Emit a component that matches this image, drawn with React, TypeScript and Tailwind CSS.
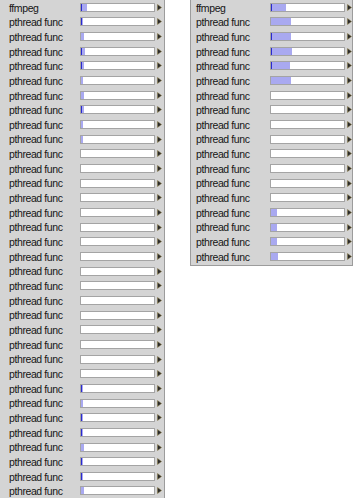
type Fill = [number, boolean]

const leftRows: Fill[] = [
  [6, true], [2, true], [3, false], [4, true], [3, true], [2, false], [3, false], [3, true], [2, false], [2, false],
  [0, false], [0, false], [0, false], [0, false], [0, false], [0, false], [0, false], [0, false],
  [0, false], [0, false], [0, false], [0, false], [0, false], [0, false], [0, false], [0, false],
  [2, true], [2, false], [2, true], [2, true], [3, false], [2, true], [2, true], [3, false],
]

const rightRows: Fill[] = [
  [15, true], [20, false], [20, true], [21, true], [19, true], [20, false],
  [0, false], [0, false], [0, false], [0, false], [0, false], [0, false], [0, false], [0, false],
  [6, false], [6, false], [6, false], [7, false],
]

function Row({ label, fill, pad }: { label: string; fill: Fill; pad: string }) {
  const [w, dark] = fill
  return (
    <div className="flex items-center h-[14.67px]">
      <div className={"w-[79px] text-[10.5px] leading-none tracking-[-0.4px] text-[#151515] pt-[1px] " + pad}>{label}</div>
      <div className="w-[75px] h-[9px] border border-[#a4a4a4] bg-white flex">
        {w > 0 && (
          <div
            className={dark ? "h-full bg-[#a9a9f0] border-l-[1.5px] border-[#2a2ad0]" : "h-full bg-[#a9a9f0]"}
            style={{ width: w }}
          />
        )}
      </div>
      <svg width="5" height="7" viewBox="0 0 5 7" className="ml-[2px]">
        <path d="M0.5 0.5 L4.5 3.5 L0.5 6.5 Z" fill="#2b2b2b" stroke="#8a7a40" strokeWidth="0.5" />
      </svg>
    </div>
  )
}

export default function App() {
  return (
    <div className="w-[363px] h-[500px] overflow-hidden bg-white flex items-start" style={{ fontFamily: '"Liberation Sans", Arial, sans-serif' }}>
      <div className="w-[165px] bg-[#d4d4d4] border-r border-[#9c9c9c] pl-[1px]">
        {leftRows.map((f, i) => (
          <Row key={i} label={i === 0 ? "ffmpeg" : "pthread func"} fill={f} pad="pl-[8px]" />
        ))}
      </div>
      <div className="ml-[25px] w-[163px] bg-[#d4d4d4] border-x border-b border-[#9c9c9c] pb-[1px]">
        {rightRows.map((f, i) => (
          <Row key={i} label={i === 0 ? "ffmpeg" : "pthread func"} fill={f} pad="pl-[5px]" />
        ))}
      </div>
    </div>
  )
}
